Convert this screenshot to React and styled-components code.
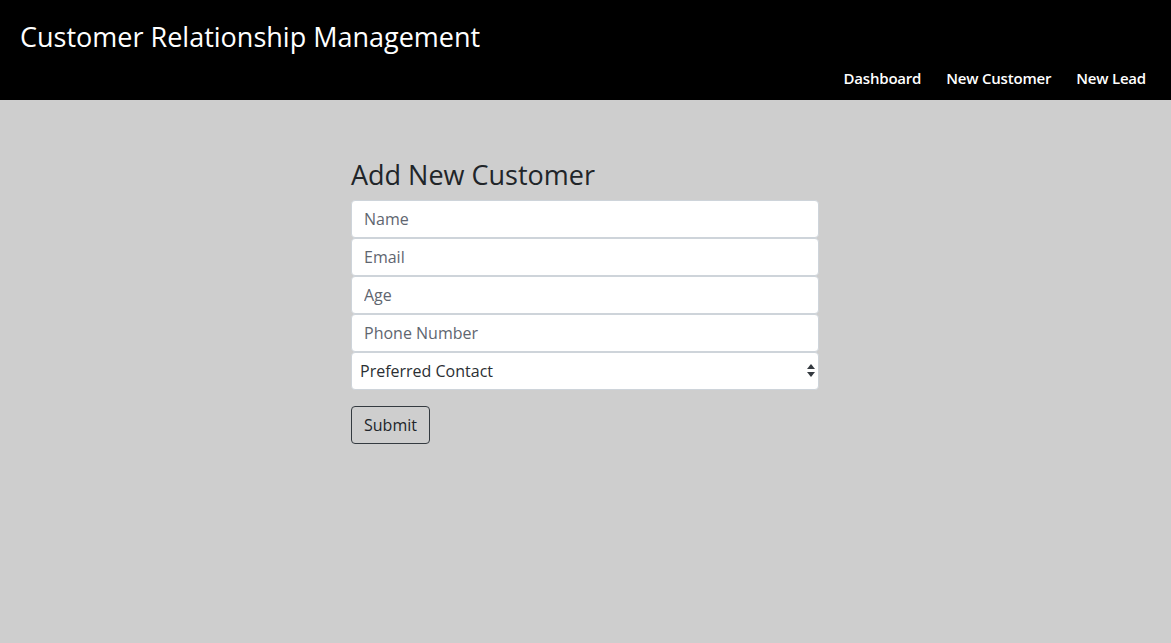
import React from "react";
import styled, { createGlobalStyle } from "styled-components";

const GlobalStyle = createGlobalStyle`
  html, body {
    margin: 0;
    padding: 0;
    background: #cecece;
    font-family: "Open Sans", "Noto Sans", sans-serif;
    color: #212529;
  }
  * {
    box-sizing: border-box;
  }
`;

const Page = styled.div`
  min-height: 643px;
  background: #cecece;
`;

const Header = styled.header`
  height: 100px;
  background: #000;
  display: flex;
  flex-direction: column;
  justify-content: space-between;
  padding: 21px 25px 10px 20px;
`;

const Title = styled.h1`
  margin: 0;
  font-size: 27px;
  line-height: 1.2;
  font-weight: 400;
  color: #fff;
`;

const Nav = styled.nav`
  display: flex;
  justify-content: flex-end;
  gap: 25px;
`;

const NavLink = styled.a`
  color: #fff;
  font-size: 15px;
  line-height: 24px;
  font-weight: 600;
  letter-spacing: -0.2px;
  text-decoration: none;
`;

const Main = styled.main`
  width: 468px;
  margin: 0 0 0 351px;
  padding-top: 59px;
`;

const Heading = styled.h2`
  margin: 0 0 9px;
  font-size: 27px;
  line-height: 1.2;
  font-weight: 400;
  color: #212529;
`;

const Form = styled.form`
  display: flex;
  flex-direction: column;
`;

const Input = styled.input`
  display: block;
  width: 100%;
  height: 38px;
  padding: 6px 12px;
  font-family: inherit;
  font-size: 16px;
  color: #212529;
  background: #fff;
  border: 1px solid #ced4da;
  border-radius: 4px;
  outline: none;

  &::placeholder {
    color: #5f6670;
  }
`;

const SelectWrap = styled.div`
  position: relative;
`;

const Select = styled.select`
  display: block;
  width: 100%;
  height: 38px;
  padding: 6px 24px 6px 8px;
  font-family: inherit;
  font-size: 16px;
  color: #2b2f33;
  background: #fff;
  border: 1px solid #ced4da;
  border-radius: 4px;
  appearance: none;
  outline: none;
`;

const Arrows = styled.svg`
  position: absolute;
  right: 4px;
  top: 12px;
  pointer-events: none;
`;

const SubmitButton = styled.button`
  align-self: flex-start;
  margin-top: 16px;
  height: 38px;
  padding: 0 12px;
  font-family: inherit;
  font-size: 16px;
  color: #212529;
  background: transparent;
  border: 1px solid #343a40;
  border-radius: 4px;
  cursor: pointer;
`;

function App() {
  return (
    <Page>
      <GlobalStyle />
      <Header>
        <Title>Customer Relationship Management</Title>
        <Nav>
          <NavLink href="#">Dashboard</NavLink>
          <NavLink href="#">New Customer</NavLink>
          <NavLink href="#">New Lead</NavLink>
        </Nav>
      </Header>
      <Main>
        <Heading>Add New Customer</Heading>
        <Form onSubmit={(e) => e.preventDefault()}>
          <Input type="text" placeholder="Name" />
          <Input type="email" placeholder="Email" />
          <Input type="number" placeholder="Age" />
          <Input type="tel" placeholder="Phone Number" />
          <SelectWrap>
            <Select defaultValue="">
              <option value="">Preferred Contact</option>
              <option value="email">Email</option>
              <option value="phone">Phone</option>
            </Select>
            <Arrows width="8" height="13" viewBox="0 0 8 13">
              <path d="M4 0 L8 5 L0 5 Z" fill="#343a40" />
              <path d="M0 8 L8 8 L4 13 Z" fill="#343a40" />
            </Arrows>
          </SelectWrap>
          <SubmitButton type="submit">Submit</SubmitButton>
        </Form>
      </Main>
    </Page>
  );
}

export default App;
